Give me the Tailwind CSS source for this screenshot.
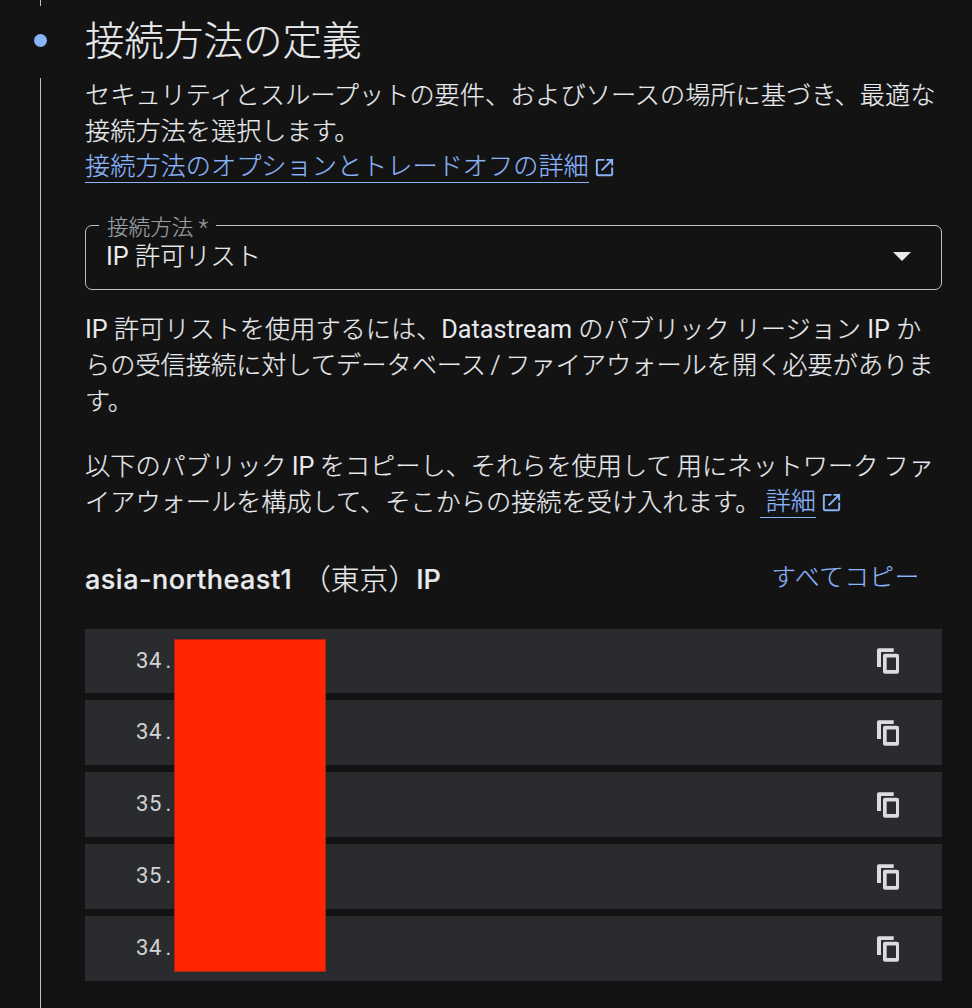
<!DOCTYPE html>
<html lang="ja">
<head>
    <meta charset="UTF-8">
    <meta name="viewport" content="width=device-width, initial-scale=1.0">
    <title>接続方法の定義</title>
    <script src="https://cdn.jsdelivr.net/npm/@tailwindcss/browser@4"></script>
</head>
<body class="bg-[#131313] text-[#e8eaed] font-[Roboto,'Noto_Sans_CJK_JP',sans-serif] font-light">
    <div class="flex h-[1008px] overflow-hidden">
        <!-- ステッパー -->
        <div class="w-[85px] shrink-0 flex flex-col">
            <div class="ml-10 w-px h-1.5 bg-[#bdc1c6]"></div>
            <div class="mt-7 ml-[34px] size-[13px] rounded-full bg-[#8ab4f8]"></div>
            <div class="mt-[31px] ml-10 w-px flex-1 bg-[#bdc1c6]"></div>
        </div>

        <!-- メインコンテンツ -->
        <main class="w-[857px] shrink-0 whitespace-nowrap text-[25.2px] leading-9 [-webkit-text-stroke:0.2px]">
            <h1 class="mt-4 h-[62px] text-[39.5px] leading-[52px]">接続方法の定義</h1>
            <p>セキュリティとスループットの要件、およびソースの場所に基づき、最適な<br>接続方法を選択します。</p>
            <div class="flex items-start h-9 text-[#8ab4f8]">
                <a class="h-[33px] leading-[34px] border-b border-[#8ab4f8]">接続方法のオプションとトレードオフの詳細</a>
                <svg class="mt-1.5 ml-1 size-[23px]" viewBox="0 0 24 24" fill="currentColor"><path d="M5 21q-.8 0-1.4-.6T3 19V5q0-.8.6-1.4T5 3h7v2H5v14h14v-7h2v7q0 .8-.6 1.4T19 21H5Zm4.7-5.3-1.4-1.4L17.6 5H14V3h7v7h-2V6.400l-9.300 9.300Z"/></svg>
            </div>

            <!-- 接続方法セレクト -->
            <fieldset class="mt-[26px] h-[78px] border border-[#bdc1c6] rounded-[7px] pl-[13px]">
                <legend class="h-[26px] px-2 text-[21.6px] leading-8 text-[#9aa0a6]">接続方法 *</legend>
                <div class="flex items-center justify-between h-[38px] pl-[7px] pr-[30px]">
                    <span><span class="font-normal [-webkit-text-stroke:0]">IP</span> 許可リスト</span>
                    <svg class="mb-0.5 w-[18px] h-[9px]" viewBox="0 0 18 9" fill="currentColor"><path d="M0 0h18L9 9z"/></svg>
                </div>
            </fieldset>

            <p class="mt-[22px]"><span class="font-normal [-webkit-text-stroke:0]">IP</span> 許可リストを使用するには、<span class="font-normal [-webkit-text-stroke:0]">Datastream</span> のパブリック リージョン <span class="font-normal [-webkit-text-stroke:0]">IP</span> か<br><span class="[word-spacing:-1.5px]">らの受信接続に対してデータベース / ファイアウォールを開く必要がありま</span><br>す。</p>
            <p class="mt-[29px] [word-spacing:-0.9px]">以下のパブリック <span class="font-normal [-webkit-text-stroke:0]">IP</span> をコピーし、それらを使用して 用にネットワーク ファ</p>
            <div class="flex items-start h-9">
                <span>イアウォールを構成して、そこからの接続を受け入れます。</span>
                <a class="-ml-px h-[33px] leading-[34px] whitespace-pre border-b border-[#8ab4f8] text-[#8ab4f8]"> 詳細</a>
                <svg class="mt-1.5 ml-1 size-[23px] text-[#8ab4f8]" viewBox="0 0 24 24" fill="currentColor"><path d="M5 21q-.8 0-1.4-.6T3 19V5q0-.8.6-1.4T5 3h7v2H5v14h14v-7h2v7q0 .8-.6 1.4T19 21H5Zm4.7-5.3-1.4-1.4L17.6 5H14V3h7v7h-2V6.400l-9.300 9.300Z"/></svg>
            </div>

            <div class="mt-[37px] flex justify-between items-center h-[44px]">
                <h2 class="flex pb-px text-[28.8px] font-[Inter,'Noto_Sans_CJK_JP',sans-serif]">
                    <span class="w-[217px] text-[27px] font-medium tracking-[0.5px]">asia-northeast1</span>
                    <span>（東京）</span>
                    <span class="-ml-px text-[27px] font-medium">IP</span>
                </h2>
                <button class="mr-[22px] pb-1 text-[24.5px] tracking-[0.7px] text-[#8ab4f8]">すべてコピー</button>
            </div>

            <!-- IP一覧 -->
            <div class="relative mt-[27px] flex flex-col gap-[7px] text-[22px] font-normal tracking-[0.7px] text-[#d2d3d5] [-webkit-text-stroke:0]">
                <div class="flex items-center justify-between h-16 bg-[#2a2b2e] pl-[51px] pr-10">
                    <span class="pb-px">34<span class="inline-block w-[13px] text-center">.</span></span>
                    <svg class="size-7 text-[#dadce0]" viewBox="0 0 28 28" fill="currentColor"><path fill-rule="evenodd" d="M3 3q0-1.700 1.700-1.700h15V5H7v15H3zM9 8.800q0-2 2-2h12q2 0 2 2v16q0 2-2 2H11q-2 0-2-2zM12.700 10.400V23H22V10.400z"/></svg>
                </div>
                <div class="flex items-center justify-between h-[65px] bg-[#2a2b2e] pl-[51px] pr-10">
                    <span class="pb-px">34<span class="inline-block w-[13px] text-center">.</span></span>
                    <svg class="size-7 text-[#dadce0]" viewBox="0 0 28 28" fill="currentColor"><path fill-rule="evenodd" d="M3 3q0-1.700 1.700-1.700h15V5H7v15H3zM9 8.800q0-2 2-2h12q2 0 2 2v16q0 2-2 2H11q-2 0-2-2zM12.700 10.400V23H22V10.400z"/></svg>
                </div>
                <div class="flex items-center justify-between h-[65px] bg-[#2a2b2e] pl-[51px] pr-10">
                    <span class="pb-px">35<span class="inline-block w-[13px] text-center">.</span></span>
                    <svg class="size-7 text-[#dadce0]" viewBox="0 0 28 28" fill="currentColor"><path fill-rule="evenodd" d="M3 3q0-1.700 1.700-1.700h15V5H7v15H3zM9 8.800q0-2 2-2h12q2 0 2 2v16q0 2-2 2H11q-2 0-2-2zM12.700 10.400V23H22V10.400z"/></svg>
                </div>
                <div class="flex items-center justify-between h-[65px] bg-[#2a2b2e] pl-[51px] pr-10">
                    <span class="pb-px">35<span class="inline-block w-[13px] text-center">.</span></span>
                    <svg class="size-7 text-[#dadce0]" viewBox="0 0 28 28" fill="currentColor"><path fill-rule="evenodd" d="M3 3q0-1.700 1.700-1.700h15V5H7v15H3zM9 8.800q0-2 2-2h12q2 0 2 2v16q0 2-2 2H11q-2 0-2-2zM12.700 10.400V23H22V10.400z"/></svg>
                </div>
                <div class="flex items-center justify-between h-[65px] bg-[#2a2b2e] pl-[51px] pr-10">
                    <span class="pb-px">34<span class="inline-block w-[13px] text-center">.</span></span>
                    <svg class="size-7 text-[#dadce0]" viewBox="0 0 28 28" fill="currentColor"><path fill-rule="evenodd" d="M3 3q0-1.700 1.700-1.700h15V5H7v15H3zM9 8.800q0-2 2-2h12q2 0 2 2v16q0 2-2 2H11q-2 0-2-2zM12.700 10.400V23H22V10.400z"/></svg>
                </div>
                <!-- アドレスの目隠し -->
                <div class="absolute left-[89px] top-[10px] w-[152px] h-[333px] bg-[#ff2600] border border-[#a62415]"></div>
            </div>
        </main>
    </div>
</body>
</html>
